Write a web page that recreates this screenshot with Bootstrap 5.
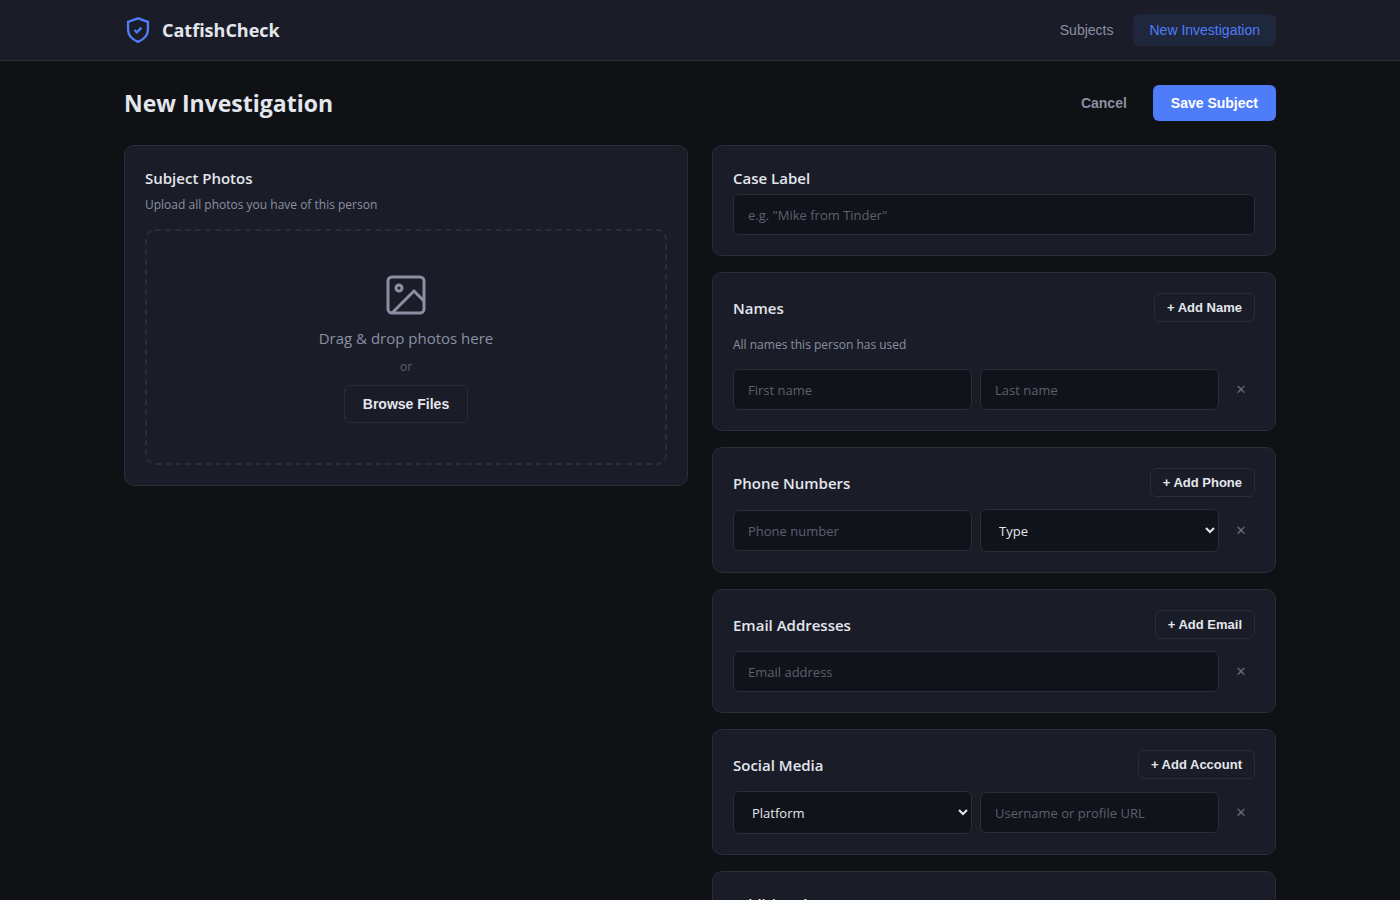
<!DOCTYPE html>
<html lang="en">
<head>
<meta charset="utf-8">
<meta name="viewport" content="width=device-width, initial-scale=1">
<title>CatfishCheck – New Investigation</title>
<link href="https://cdn.jsdelivr.net/npm/bootstrap@5.3.0/dist/css/bootstrap.min.css" rel="stylesheet">
<style>
  :root { --page:#0f1114; --panel:#1a1d27; --field:#10131a; --line:#2a2d3a; --ink:#e4e6ed; --dim:#8b8fa3; --faint:#5c6070; --accent:#4f7df9; }
  body { background:var(--page); color:var(--ink); font-family:"Segoe UI","Open Sans","Noto Sans",sans-serif; font-size:14px; line-height:22px; }
  .shell { max-width:1200px; padding-left:24px; padding-right:24px; }
  .topbar { background:var(--panel); border-bottom:1px solid var(--line); min-height:61px; padding:0; }
  .brand-link { gap:10px; }
  .brand-text { font-size:18px; font-weight:700; color:var(--ink); line-height:28px; }
  .btn { --bs-btn-border-radius:6px; font-family:"Liberation Sans",Arial,sans-serif; }
  .nav-link { font-family:"Liberation Sans",Arial,sans-serif; font-size:14px; line-height:16px; padding:8px 16px; border-radius:6px; color:var(--dim); }
  .nav-link:hover { color:var(--ink); }
  .nav-link.active { color:var(--accent); background:#1f273c; }
  .btn-main, .btn-plain { font-size:14px; font-weight:600; line-height:16px; padding:10px 18px; }
  .btn-main, .btn-main:hover { background:var(--accent); color:#fff; border:0; }
  .btn-plain { color:var(--dim); border:0; }
  .btn-line { border:1px solid var(--line); color:var(--ink); font-size:14px; font-weight:600; line-height:16px; padding:10px 18px; }
  .btn-line.btn-sm { font-size:13px; line-height:15px; padding:6px 12px; }
  .btn-line:hover, .btn-plain:hover { color:#fff; border-color:var(--dim); }
  .btn-remove { width:28px; color:#686c7c; font-family:"DejaVu Sans",sans-serif; font-size:13px; font-weight:700; line-height:16px; padding:4px 0; border:0; }
  h1 { font-size:23px; font-weight:700; line-height:36px; }
  .panel { background:var(--panel); border:1px solid var(--line); border-radius:10px; padding:20px; }
  .panel-title { font-size:15px; font-weight:600; line-height:24px; color:var(--ink); }
  .hint { font-size:12px; line-height:21px; color:var(--dim); }
  .mb-12 { margin-bottom:12px; }
  .mb-14 { margin-bottom:14px; }
  .form-control, .form-control:focus { background:var(--field); border:1px solid var(--line); border-radius:6px; color:var(--ink); font-size:13px; line-height:19px; padding:11px 14px 9px; box-shadow:none; min-height:41px; }
  .form-control::placeholder { color:var(--faint); opacity:1; }
  .form-control:focus { border-color:var(--accent); }
  select.form-control, select.form-control:focus { appearance:auto; height:43px; padding:10px 14px; }
  .field-row > .form-control { flex:1 1 0; min-width:0; }
  .dropzone { border:2px dashed var(--line); border-radius:10px; padding:40px 20px; }
  .drop-text { font-size:15px; font-weight:500; line-height:22px; color:var(--dim); }
  .drop-or { font-size:12px; line-height:20px; color:var(--faint); }
</style>
</head>
<body>
<nav class="navbar topbar">
  <div class="container-fluid shell">
    <a class="brand-link d-flex align-items-center text-decoration-none" href="#">
      <svg width="28" height="28" viewBox="0 0 24 24" fill="none" stroke="#4f7df9" stroke-width="2" aria-hidden="true"><path d="M12 2 3.500 5v7c0 5 3.500 8 8.500 10.200 5-2.200 8.500-5.200 8.500-10.200V5z"/><path d="m9 12 2 2 4-4"/></svg>
      <span class="brand-text">CatfishCheck</span>
    </a>
    <div class="nav gap-1">
      <a class="nav-link" href="#">Subjects</a>
      <a class="nav-link active" href="#" aria-current="page">New Investigation</a>
    </div>
  </div>
</nav>
<main class="container-fluid shell py-4">
  <div class="d-flex justify-content-between align-items-center mb-4">
    <h1 class="mb-0">New Investigation</h1>
    <div class="d-flex gap-2">
      <button type="button" class="btn btn-plain">Cancel</button>
      <button type="submit" form="subject" class="btn btn-main">Save Subject</button>
    </div>
  </div>
  <form id="subject" class="row g-4 align-items-start">
    <div class="col-6">
      <section class="panel">
        <h2 class="panel-title mb-1">Subject Photos</h2>
        <p class="hint mb-14">Upload all photos you have of this person</p>
        <div class="dropzone d-flex flex-column align-items-center">
          <svg class="mb-2" width="48" height="48" viewBox="0 0 24 24" fill="none" stroke="#8b8fa3" stroke-width="1.500" aria-hidden="true"><rect x="3" y="3" width="18" height="18" rx="2"/><circle cx="8.500" cy="8.500" r="1.500"/><path d="m21 15-5-5L5 21"/></svg>
          <p class="drop-text mb-2">Drag &amp; drop photos here</p>
          <p class="drop-or mb-2">or</p>
          <button type="button" class="btn btn-line">Browse Files</button>
        </div>
      </section>
    </div>
    <div class="col-6 d-flex flex-column gap-3">
      <section class="panel">
        <label class="panel-title d-block mb-1" for="case">Case Label</label>
        <input id="case" class="form-control" type="text" placeholder="e.g. &quot;Mike from Tinder&quot;">
      </section>
      <section class="panel">
        <div class="d-flex justify-content-between align-items-center mb-12">
          <h2 class="panel-title mb-0">Names</h2>
          <button type="button" class="btn btn-line btn-sm">+ Add Name</button>
        </div>
        <p class="hint mb-14">All names this person has used</p>
        <div class="field-row d-flex align-items-center gap-2">
          <input class="form-control" type="text" placeholder="First name" aria-label="First name">
          <input class="form-control" type="text" placeholder="Last name" aria-label="Last name">
          <button type="button" class="btn btn-remove" aria-label="Remove name">✕</button>
        </div>
      </section>
      <section class="panel">
        <div class="d-flex justify-content-between align-items-center mb-12">
          <h2 class="panel-title mb-0">Phone Numbers</h2>
          <button type="button" class="btn btn-line btn-sm">+ Add Phone</button>
        </div>
        <div class="field-row d-flex align-items-center gap-2">
          <input class="form-control" type="tel" placeholder="Phone number" aria-label="Phone number">
          <select class="form-control" aria-label="Phone type"><option>Type</option><option>Mobile</option><option>Home</option><option>Work</option></select>
          <button type="button" class="btn btn-remove" aria-label="Remove phone">✕</button>
        </div>
      </section>
      <section class="panel">
        <div class="d-flex justify-content-between align-items-center mb-12">
          <h2 class="panel-title mb-0">Email Addresses</h2>
          <button type="button" class="btn btn-line btn-sm">+ Add Email</button>
        </div>
        <div class="field-row d-flex align-items-center gap-2">
          <input class="form-control" type="email" placeholder="Email address" aria-label="Email address">
          <button type="button" class="btn btn-remove" aria-label="Remove email">✕</button>
        </div>
      </section>
      <section class="panel">
        <div class="d-flex justify-content-between align-items-center mb-12">
          <h2 class="panel-title mb-0">Social Media</h2>
          <button type="button" class="btn btn-line btn-sm">+ Add Account</button>
        </div>
        <div class="field-row d-flex align-items-center gap-2">
          <select class="form-control" aria-label="Platform"><option>Platform</option><option>Instagram</option><option>Facebook</option></select>
          <input class="form-control" type="text" placeholder="Username or profile URL" aria-label="Username or profile URL">
          <button type="button" class="btn btn-remove" aria-label="Remove account">✕</button>
        </div>
      </section>
      <section class="panel">
        <label class="panel-title d-block mb-1" for="notes">Additional Notes</label>
        <textarea id="notes" class="form-control" rows="4"></textarea>
      </section>
    </div>
  </form>
</main>
<script src="https://cdn.jsdelivr.net/npm/bootstrap@5.3.0/dist/js/bootstrap.bundle.min.js"></script>
</body>
</html>
